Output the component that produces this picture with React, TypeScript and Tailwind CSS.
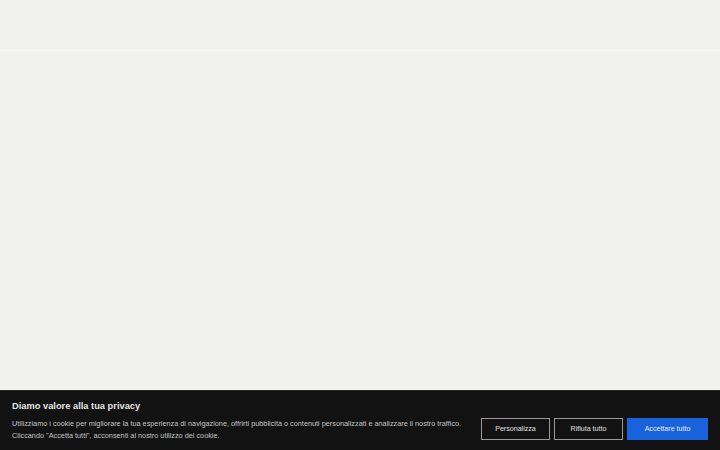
export default function App() {
  return (
    <div className="relative flex h-[450px] w-[720px] flex-col overflow-hidden bg-[#f1f1ef] font-['Liberation_Sans',Arial,sans-serif]">
      <header className="h-[51px] shrink-0 border-b border-[#f5f5f3] bg-[#f1f1ef]" />
      <main className="flex-1" />
      <div className="absolute inset-x-0 bottom-0 h-[60px] border-t border-[#2a2a2a] bg-[#121212] px-[12px] pt-[8px]">
        <h2 className="text-[9.3px] font-bold leading-[14px] text-[#e5e5e5]">Diamo valore alla tua privacy</h2>
        <div className="mt-[5px] flex items-start justify-between">
          <p className="whitespace-nowrap text-[7.3px] leading-[12px] text-[#c4c4c4]">
            Utilizziamo i cookie per migliorare la tua esperienza di navigazione, offrirti pubblicità o contenuti personalizzati e analizzare il nostro traffico.
            <br />
            Cliccando "Accetta tutti", acconsenti al nostro utilizzo dei cookie.
          </p>
          <div className="flex gap-[4px]">
            <button className="h-[22px] w-[69px] border-[1.5px] border-[#9a9a9a] text-[7.1px] font-medium text-[#e0e0e0]">Personalizza</button>
            <button className="h-[22px] w-[69px] border-[1.5px] border-[#9a9a9a] text-[7.1px] font-medium text-[#e0e0e0]">Rifiuta tutto</button>
            <button className="h-[22px] w-[81px] border-[1.5px] border-[#1863dc] bg-[#1863dc] text-[7.1px] font-medium text-[#e8eefb]">Accettare tutto</button>
          </div>
        </div>
      </div>
    </div>
  );
}
